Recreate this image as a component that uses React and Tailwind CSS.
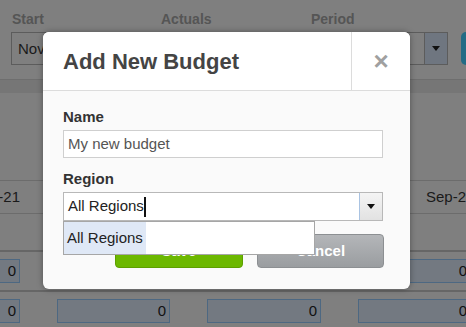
import React from "react";

function CellInput({ className = "" }) {
  return (
    <div
      className={`h-[24px] border border-[#4d6882] bg-[#737981] text-right pr-[3px] text-[15px] leading-[22px] text-[#111] ${className}`}
    >
      0
    </div>
  );
}

function InputRow() {
  return (
    <div className="h-[38px] flex items-center">
      <CellInput className="w-[113px] ml-[-93px] shrink-0" />
      <CellInput className="w-[113px] ml-[37px] shrink-0" />
      <CellInput className="w-[114px] ml-[37px] shrink-0" />
      <CellInput className="w-[113px] ml-[37px] shrink-0" />
    </div>
  );
}

export default function App() {
  return (
    <div className="relative w-[466px] h-[327px] overflow-hidden bg-[#7f7f7f] font-['Liberation_Sans',Arial,sans-serif]">
      {/* page behind the overlay */}
      <div className="flex flex-col">
        <div className="flex pl-[11px] pt-[10px] h-[79px]">
          <div className="w-[150px] shrink-0">
            <div className="text-[14px] font-bold text-[#555] leading-[18px] pl-[1px]">Start</div>
            <div className="mt-[4px] h-[33px] w-[138px] border border-[#5c5c5c] text-[15px] leading-[31px] pl-[6px] text-[#1a1a1a]">
              Nov-21
            </div>
          </div>
          <div className="w-[150px] shrink-0">
            <div className="text-[14px] font-bold text-[#555] leading-[18px]">Actuals</div>
            <div className="mt-[4px] h-[33px] w-[138px] border border-[#5c5c5c]" />
          </div>
          <div className="w-[150px] shrink-0 flex flex-col">
            <div className="text-[14px] font-bold text-[#555] leading-[18px]">Period</div>
            <div className="mt-[4px] flex items-start">
              <div className="h-[33px] w-[137px] shrink-0 border border-[#5c5c5c] flex justify-end">
                <div className="w-[23px] h-full border-l border-[#5c5c5c] bg-[#6f7680] flex items-center justify-center">
                  <div className="w-0 h-0 border-l-[4px] border-r-[4px] border-t-[5px] border-l-transparent border-r-transparent border-t-[#111]" />
                </div>
              </div>
              <div className="ml-[13px] h-[33px] w-[40px] rounded-[5px] bg-[#236b85] shrink-0" />
            </div>
          </div>
        </div>
        <div className="h-[14px] bg-[#767676] border-t border-[#6e6e6e]" />
        <div className="h-[87px]" />
        <div className="h-[34px] border-t border-b border-[#6c6c6c] flex items-center text-[15px] text-[#1a1a1a]">
          <div className="w-[20px] overflow-hidden flex justify-end shrink-0">
            <span className="whitespace-nowrap">Aug-21</span>
          </div>
          <span className="ml-[406px] whitespace-nowrap">Sep-21</span>
        </div>
        <div className="h-[36px]" />
        <div className="h-[2px] bg-[#666]" />
        <InputRow />
        <div className="h-[2px] bg-[#666]" />
        <InputRow />
      </div>

      {/* modal */}
      <div className="absolute left-[43px] top-[32px] w-[367px] h-[257px] rounded-[6px] bg-[#fafafa] shadow-[0_0_6px_rgba(0,0,0,0.35)] flex flex-col">
        <div className="h-[59px] bg-white rounded-t-[6px] border-b border-[#dcdcdc] flex items-stretch">
          <div className="flex-1 flex items-center pl-[20px] text-[22px] font-bold text-[#444]">
            Add New Budget
          </div>
          <div className="w-[59px] border-l border-[#dcdcdc] flex items-center justify-center text-[26px] font-bold text-[#a0a0a0] leading-none">
            ×
          </div>
        </div>
        <div className="relative flex flex-col pl-[20px] pr-[27px] pt-[17px]">
          <label className="text-[15px] font-bold text-[#333] leading-[18px]">Name</label>
          <div className="mt-[4px] h-[28px] border border-[#cfcfcf] bg-white text-[15px] text-[#555] leading-[26px] pl-[4px]">
            My new budget
          </div>
          <label className="mt-[12px] text-[15px] font-bold text-[#333] leading-[18px]">Region</label>
          <div className="mt-[4px] h-[29px] border border-[#b8b8b8] bg-white flex">
            <div className="flex-1 flex items-center pl-[4px] text-[15px] text-[#222]">
              All Regions
              <span className="inline-block w-[2px] h-[20px] bg-[#111]" />
            </div>
            <div className="w-[23px] border-l border-[#a9c3e2] bg-gradient-to-b from-[#f4f4f4] to-[#e2e2e2] flex items-center justify-center">
              <div className="w-0 h-0 border-l-[4px] border-r-[4px] border-t-[5px] border-l-transparent border-r-transparent border-t-[#111]" />
            </div>
          </div>
          <div className="mt-[13px] flex justify-end gap-[14px]">
            <button className="w-[128px] h-[34px] rounded-[4px] bg-[#6cb800] border border-[#5d9f00] text-white font-bold text-[15px]">
              Save
            </button>
            <button className="w-[127px] h-[34px] rounded-[4px] bg-gradient-to-b from-[#b4b6b9] to-[#9a9da0] border border-[#8c8f92] text-white font-bold text-[15px] mr-[-1px]">
              Cancel
            </button>
          </div>
          <div className="absolute left-[20px] top-[130px] w-[252px] h-[34px] border border-[#a6a6a6] bg-white flex items-stretch">
            <div className="bg-[#dfe8f6] px-[3px] flex items-center text-[15px] text-[#222]">All Regions</div>
          </div>
        </div>
      </div>
    </div>
  );
}
